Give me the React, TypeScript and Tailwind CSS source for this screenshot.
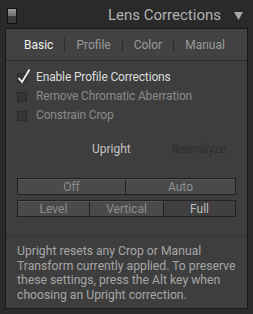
import { useState } from "react";

const font = { fontFamily: 'Roboto, "Noto Sans", sans-serif' };

function Box({ checked }: { checked?: boolean }) {
  return (
    <span className="relative w-[10px] h-[10px] border border-[#2a2a2a] bg-[#353535] shrink-0">
      {checked && (
        <svg viewBox="0 0 14 16" className="absolute left-[-1px] top-[-6px] w-[14px] h-[16px]">
          <path d="M1.5 10 L5 14 L12.5 1.5" fill="none" stroke="#f2f2f2" strokeWidth="1.8" />
        </svg>
      )}
    </span>
  );
}

export default function App() {
  const [tab, setTab] = useState("Basic");
  const tabs = ["Basic", "Profile", "Color", "Manual"];

  return (
    <div
      style={font}
      className="w-[253px] h-[314px] bg-[#2a2a2a] flex flex-col overflow-hidden select-none"
    >
      {/* header */}
      <div className="h-[28px] shrink-0 flex items-center pl-[7px] pr-[10px] pt-[3px]">
        <span className="w-[10px] h-[16px] border border-[#111] flex flex-col">
          <span className="flex-1 bg-gradient-to-b from-[#9a9a9a] to-[#6e6e6e]" />
          <span className="flex-1 bg-[#3a3a3a]" />
        </span>
        <span className="ml-auto text-[15px] text-[#b2b2b2] leading-none">Lens Corrections</span>
        <svg viewBox="0 0 9 8" className="w-[9px] h-[8px] ml-[13px]">
          <path d="M0 0 H9 L4.5 8 Z" fill="#a8a8a8" />
        </svg>
      </div>

      {/* panel */}
      <div className="ml-[5px] mr-[5px] h-[281px] border border-[#161616] bg-[#3e3e3e] flex flex-col">
        <div className="h-[32px] shrink-0 flex items-center pl-[18px] text-[12px] border-b border-[#2a2a2a] bg-[#424242]">
          {tabs.map((t, i) => (
            <div key={t} className="flex items-center">
              {i > 0 && <span className="w-px h-[14px] bg-[#2c2c2c] mx-[11px]" />}
              <span
                onClick={() => setTab(t)}
                className={tab === t ? "text-[#f0f0f0]" : "text-[#9a9a9a]"}
              >
                {t}
              </span>
            </div>
          ))}
        </div>

        <div className="flex flex-col pl-[11px] pt-[11px] gap-[8px] text-[12px] tracking-[-0.15px] leading-[11px]">
          <div className="flex items-center gap-[9px] h-[11px] text-[#dcdcdc]">
            <Box checked />
            Enable Profile Corrections
          </div>
          <div className="flex items-center gap-[9px] h-[11px] text-[#8a8a8a]">
            <Box />
            Remove Chromatic Aberration
          </div>
          <div className="flex items-center gap-[9px] h-[11px] text-[#8a8a8a]">
            <Box />
            Constrain Crop
          </div>
        </div>

        <div className="flex items-center mt-[20px] h-[16px] text-[12px]">
          <span className="ml-[86px] text-[#c4c4c4]">Upright</span>
          <span className="ml-[41px] text-[#2e2e2e]">Reanalyze</span>
        </div>

        <div className="mx-[11px] mt-[21px] flex flex-col gap-[5px] text-[12px] leading-none">
          <div className="flex h-[17px] border border-[#222] bg-[#4a4a4a]">
            <div className="w-[108px] flex items-center justify-center text-[#8e8e8e] border-r border-[#222] border-t border-t-[#595959]">Off</div>
            <div className="flex-1 flex items-center justify-center text-[#8e8e8e] border-t border-t-[#595959]">Auto</div>
          </div>
          <div className="flex h-[17px] border border-[#222] bg-[#4a4a4a]">
            <div className="w-[72px] flex items-center justify-center text-[#8e8e8e] border-r border-[#222] border-t border-t-[#595959]">Level</div>
            <div className="w-[74px] flex items-center justify-center text-[#8e8e8e] border-r border-[#222] border-t border-t-[#595959]">Vertical</div>
            <div className="flex-1 flex items-center justify-center text-[#bcbcbc] bg-[#404040]">Full</div>
          </div>
        </div>

        <div className="mt-[18px] border-t border-[#333]" />

        <p className="px-[11px] pt-[8px] text-[12.2px] leading-[14.5px] text-[#a6a6a6] whitespace-nowrap">
          Upright resets any Crop or Manual
          <br />
          Transform currently applied. To preserve
          <br />
          these settings, press the Alt key when
          <br />
          choosing an Upright correction.
        </p>
      </div>
    </div>
  );
}
